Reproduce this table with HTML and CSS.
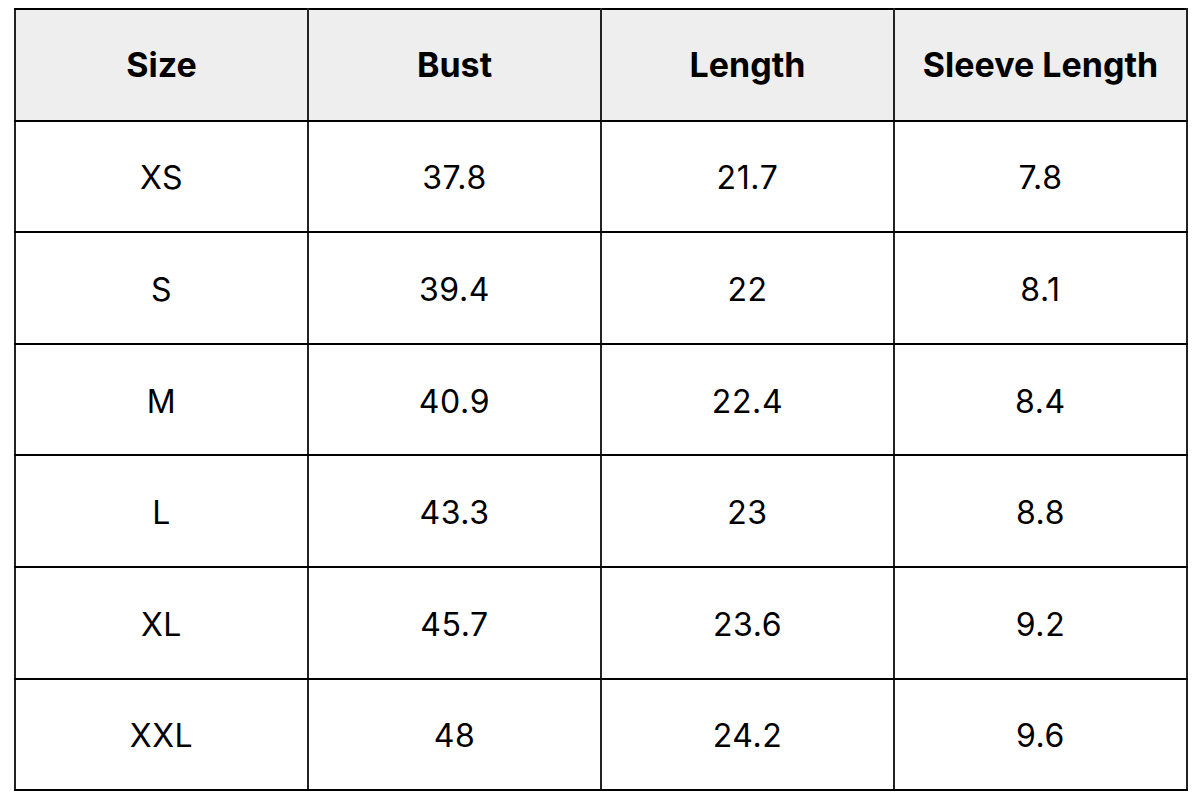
FILE: index.html
```html
<!DOCTYPE html>
<html lang="en">
<head>
<meta charset="utf-8">
<title>Size Chart</title>
<link rel="stylesheet" href="styles.css">
</head>
<body>
<table class="size-table">
  <thead>
    <tr><th>Size</th><th>Bust</th><th>Length</th><th>Sleeve Length</th></tr>
  </thead>
  <tbody>
    <tr><td>XS</td><td>37.8</td><td>21.7</td><td>7.8</td></tr>
    <tr><td>S</td><td>39.4</td><td>22</td><td>8.1</td></tr>
    <tr><td>M</td><td>40.9</td><td>22.4</td><td>8.4</td></tr>
    <tr><td>L</td><td>43.3</td><td>23</td><td>8.8</td></tr>
    <tr><td>XL</td><td>45.7</td><td>23.6</td><td>9.2</td></tr>
    <tr><td>XXL</td><td>48</td><td>24.2</td><td>9.6</td></tr>
  </tbody>
</table>
</body>
</html>
```
FILE: styles.css
```css
html, body {
  margin: 0;
  padding: 0;
  background: #ffffff;
}
body {
  padding: 8px 13px 0 14px;
  font-family: Inter, "Open Sans", "Liberation Sans", sans-serif;
  color: #000;
}
.size-table {
  width: 1174px;
  border-collapse: collapse;
  table-layout: fixed;
  border: 2px solid #2a2a2a;
}
.size-table th,
.size-table td {
  height: 109.6px;
  padding: 0;
  text-align: center;
  vertical-align: middle;
  border-left: 2px solid #222;
  border-right: 2px solid #222;
  border-top: 2px solid #000;
  border-bottom: 2px solid #000;
}
.size-table th {
  background: #eeeeee;
  font-weight: 700;
  font-size: 34px;
}
.size-table td {
  height: 106.6px;
  font-weight: 400;
  font-size: 32px;
  letter-spacing: 0.6px;
  padding-top: 3px;
}
```
